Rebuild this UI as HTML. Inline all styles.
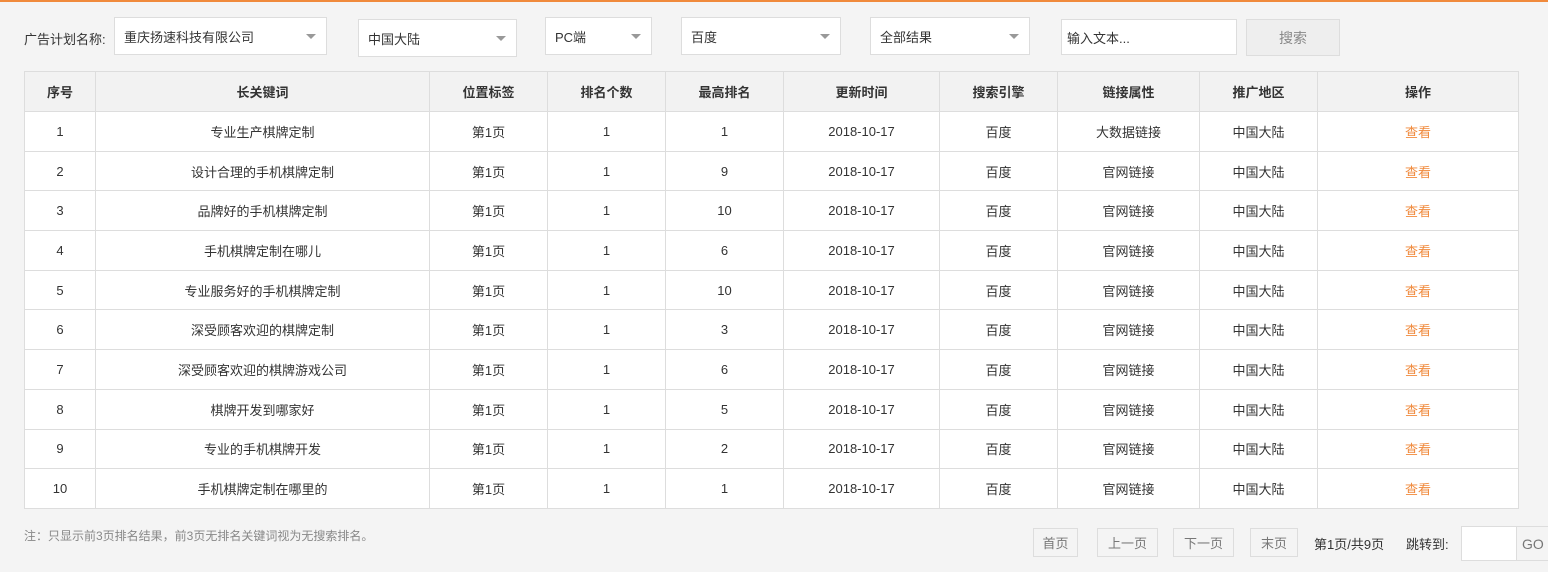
<!DOCTYPE html>
<html><head><meta charset="utf-8"><style>
*{box-sizing:border-box;margin:0;padding:0}
body{width:1548px;height:572px;background:#f4f4f4;font-family:"Liberation Sans","Noto Sans CJK SC",sans-serif;font-size:13px;color:#333;position:relative;overflow:hidden}
.a{position:absolute}
.sel{position:absolute;background:#fff;border:1px solid #ddd;padding-left:9px;display:flex;align-items:center;font-size:13px;color:#333}
.dd:after{content:"";position:absolute;right:10px;top:50%;margin-top:-2px;border-left:5px solid transparent;border-right:5px solid transparent;border-top:5px solid #999}
table{position:absolute;left:24px;top:71px;width:1495px;border-collapse:collapse;background:#fff}
td,th{border:1px solid #ddd;text-align:center;height:39.7px;font-size:13px;font-weight:normal}
th{background:#f2f2f2;font-weight:bold;color:#333;height:40px}
td.o{color:#f08a3c}
.pb{position:absolute;top:528px;height:29px;border:1px solid #ddd;background:#f4f4f4;color:#777;display:flex;align-items:center;justify-content:center;font-size:13px}
</style></head><body>
<div class="a" style="left:0;top:0;width:1548px;height:2px;background:#f08a3c"></div>
<div class="a" style="left:24px;top:29px">广告计划名称:</div>
<div class="sel dd" style="left:114px;top:17px;width:213px;height:38px">重庆扬速科技有限公司</div>
<div class="sel dd" style="left:358px;top:19px;width:159px;height:38px">中国大陆</div>
<div class="sel dd" style="left:545px;top:17px;width:107px;height:38px">PC端</div>
<div class="sel dd" style="left:681px;top:17px;width:160px;height:38px">百度</div>
<div class="sel dd" style="left:870px;top:17px;width:160px;height:38px">全部结果</div>
<div class="sel" style="left:1061px;top:19px;width:176px;height:36px;padding-left:5px">输入文本...</div>
<div class="a" style="left:1246px;top:19px;width:94px;height:37px;border:1px solid #ddd;background:#eee;color:#888;display:flex;align-items:center;justify-content:center;font-size:14px">搜索</div>
<table>
<tr><th style="width:71px">序号</th><th style="width:334px">长关键词</th><th style="width:118px">位置标签</th><th style="width:118px">排名个数</th><th style="width:118px">最高排名</th><th style="width:156px">更新时间</th><th style="width:118px">搜索引擎</th><th style="width:142px">链接属性</th><th style="width:118px">推广地区</th><th>操作</th></tr>
<tr><td>1</td><td>专业生产棋牌定制</td><td>第1页</td><td>1</td><td>1</td><td>2018-10-17</td><td>百度</td><td>大数据链接</td><td>中国大陆</td><td class="o">查看</td></tr>
<tr><td>2</td><td>设计合理的手机棋牌定制</td><td>第1页</td><td>1</td><td>9</td><td>2018-10-17</td><td>百度</td><td>官网链接</td><td>中国大陆</td><td class="o">查看</td></tr>
<tr><td>3</td><td>品牌好的手机棋牌定制</td><td>第1页</td><td>1</td><td>10</td><td>2018-10-17</td><td>百度</td><td>官网链接</td><td>中国大陆</td><td class="o">查看</td></tr>
<tr><td>4</td><td>手机棋牌定制在哪儿</td><td>第1页</td><td>1</td><td>6</td><td>2018-10-17</td><td>百度</td><td>官网链接</td><td>中国大陆</td><td class="o">查看</td></tr>
<tr><td>5</td><td>专业服务好的手机棋牌定制</td><td>第1页</td><td>1</td><td>10</td><td>2018-10-17</td><td>百度</td><td>官网链接</td><td>中国大陆</td><td class="o">查看</td></tr>
<tr><td>6</td><td>深受顾客欢迎的棋牌定制</td><td>第1页</td><td>1</td><td>3</td><td>2018-10-17</td><td>百度</td><td>官网链接</td><td>中国大陆</td><td class="o">查看</td></tr>
<tr><td>7</td><td>深受顾客欢迎的棋牌游戏公司</td><td>第1页</td><td>1</td><td>6</td><td>2018-10-17</td><td>百度</td><td>官网链接</td><td>中国大陆</td><td class="o">查看</td></tr>
<tr><td>8</td><td>棋牌开发到哪家好</td><td>第1页</td><td>1</td><td>5</td><td>2018-10-17</td><td>百度</td><td>官网链接</td><td>中国大陆</td><td class="o">查看</td></tr>
<tr><td>9</td><td>专业的手机棋牌开发</td><td>第1页</td><td>1</td><td>2</td><td>2018-10-17</td><td>百度</td><td>官网链接</td><td>中国大陆</td><td class="o">查看</td></tr>
<tr><td>10</td><td>手机棋牌定制在哪里的</td><td>第1页</td><td>1</td><td>1</td><td>2018-10-17</td><td>百度</td><td>官网链接</td><td>中国大陆</td><td class="o">查看</td></tr>
</table>
<div class="a" style="left:24px;top:527px;color:#888;font-size:12px">注：只显示前3页排名结果，前3页无排名关键词视为无搜索排名。</div>
<div class="pb" style="left:1033px;width:45px">首页</div>
<div class="pb" style="left:1097px;width:61px">上一页</div>
<div class="pb" style="left:1173px;width:61px">下一页</div>
<div class="pb" style="left:1250px;width:48px">末页</div>
<div class="a" style="left:1314px;top:534px;color:#333">第1页/共9页</div>
<div class="a" style="left:1406px;top:534px;color:#333">跳转到:</div>
<div class="a" style="left:1461px;top:526px;width:56px;height:35px;border:1px solid #ddd;background:#fff"></div>
<div class="a" style="left:1516px;top:526px;width:40px;height:35px;border:1px solid #ddd;background:#f4f4f4;color:#777;font-size:14px;padding:9px 0 0 5px">GO</div>
</body></html>
